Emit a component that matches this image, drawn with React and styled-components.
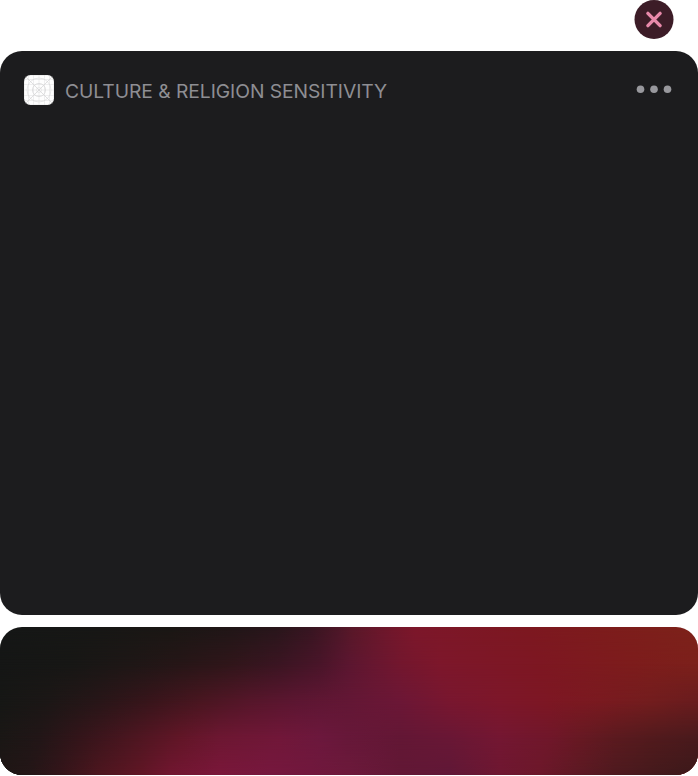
import React from "react";
import styled, { createGlobalStyle } from "styled-components";

const GlobalStyle = createGlobalStyle`
  * { box-sizing: border-box; }
  body { margin: 0; background: #fff; font-family: Inter, "Liberation Sans", sans-serif; }
`;

const Page = styled.main`
  width: 698px;
  height: 776px;
  display: flex;
  flex-direction: column;
  overflow: hidden;
`;

const TopBar = styled.div`
  display: flex;
  justify-content: flex-end;
  height: 51px;
  flex: none;
  padding-right: 24px;
`;

const CloseButton = styled.button`
  width: 40px;
  height: 40px;
  padding: 0;
  border: 0;
  background: none;
  display: block;
  svg { display: block; }
`;

const Card = styled.section`
  width: 697.6px;
  height: 564px;
  flex: none;
  border-radius: 22px;
  background: #1c1c1e;
`;

const CardHeader = styled.header`
  display: flex;
  align-items: center;
  height: 30px;
  margin: 24px 26px 0 24px;
`;

const AppIcon = styled.svg`
  width: 30px;
  height: 30px;
  flex: none;
  display: block;
`;

const Title = styled.h1`
  margin: 2px 0 0 11px;
  flex: 1;
  font-size: 19.3px;
  line-height: 28px;
  font-weight: 400;
  letter-spacing: -0.06px;
  color: #8e8e93;
  white-space: nowrap;
`;

const MoreButton = styled.button`
  display: block;
  padding: 0;
  margin-bottom: 1px;
  border: 0;
  background: none;
  svg { display: block; }
`;

const Glow = styled.section`
  display: grid;
  width: 697.6px;
  height: 148.4px;
  flex: none;
  margin-top: 12px;
  border-radius: 22px;
  overflow: hidden;
`;

const GlowLayer = styled.div`
  grid-area: 1 / 1;
  background: linear-gradient(to right, ${(p) => p.$stops});
  ${(p) => p.$to > 0 && `mask-image: linear-gradient(to bottom, transparent ${p.$to - 25}%, #000 ${p.$to}%);`}
`;

const bands = [
  [[0, "#151716"], [100, "#171715"], [170, "#1a1714"], [230, "#201617"], [276, "#28161b"], [312, "#381521"], [338, "#4c1727"], [352, "#591828"], [385, "#6e172b"], [415, "#7d172a"], [530, "#7d1820"], [600, "#7d1c1c"], [698, "#7d221a"]],
  [[0, "#151615"], [70, "#171715"], [130, "#1e1716"], [180, "#261617"], [230, "#30161a"], [280, "#3b1522"], [320, "#491529"], [348, "#5b1630"], [375, "#681730"], [400, "#73172e"], [440, "#7d172b"], [540, "#7d1722"], [630, "#7d1c1c"], [698, "#7c201b"]],
  [[0, "#161715"], [50, "#1c1716"], [100, "#281618"], [150, "#38151b"], [200, "#491620"], [250, "#56162a"], [300, "#5d1632"], [348, "#631735"], [400, "#6c1736"], [450, "#79172f"], [500, "#7d172a"], [550, "#7d1723"], [600, "#7a1a20"], [650, "#731d1e"], [698, "#691c1e"]],
  [[0, "#1a1715"], [40, "#221617"], [80, "#34151a"], [130, "#4b1620"], [180, "#621627"], [220, "#6d1732"], [280, "#711739"], [320, "#6c183d"], [348, "#671839"], [400, "#631735"], [450, "#691735"], [500, "#741732"], [550, "#70172a"], [580, "#671923"], [615, "#5b1a1f"], [650, "#521a1d"], [698, "#491a1c"]],
  [[0, "#1f1614"], [30, "#241617"], [60, "#34151a"], [100, "#4e161f"], [140, "#601625"], [170, "#711630"], [220, "#7a173a"], [270, "#76183e"], [310, "#71183d"], [348, "#6c193b"], [400, "#621835"], [450, "#601837"], [500, "#6e1731"], [540, "#6c182a"], [580, "#5c1923"], [615, "#4e1a1f"], [650, "#451a1c"], [698, "#3b191a"]],
];

const toStops = (band) => band.map(([x, color]) => `${color} ${x}px`).join(", ");

function GridIcon() {
  return (
    <AppIcon viewBox="0 0 30 30" aria-hidden="true">
      <rect width="30" height="30" rx="6.5" fill="#fefefe" />
      <g fill="none" stroke="#b0b0b3" strokeWidth="0.4" opacity="0.5">
        <rect x="0.3" y="0.3" width="29.4" height="29.4" rx="6.3" />
        <path d="M0 4.5h30M0 9.5h30M0 15h30M0 20.5h30M0 25.5h30M4.5 0v30M9.5 0v30M15 0v30M20.5 0v30M25.5 0v30" />
        <path d="M1.5 1.5l27 27M28.5 1.5l-27 27" strokeWidth="0.8" />
        <circle cx="15" cy="15" r="12" strokeWidth="0.6" />
        <circle cx="15" cy="15" r="6.5" strokeWidth="0.8" />
        <circle cx="15" cy="15" r="2.6" />
      </g>
    </AppIcon>
  );
}

export default function App() {
  return (
    <>
      <GlobalStyle />
      <Page>
        <TopBar>
          <CloseButton aria-label="Close">
            <svg width="40" height="40" viewBox="0 0 40 40">
              <circle cx="20" cy="19.5" r="19.5" fill="#3c1c27" />
              <path d="M13.9 13.4l12.2 12.2M26.1 13.4L13.9 25.6" stroke="#e889aa" strokeWidth="3.4" strokeLinecap="round" />
            </svg>
          </CloseButton>
        </TopBar>
        <Card>
          <CardHeader>
            <GridIcon />
            <Title>CULTURE &amp; RELIGION SENSITIVITY</Title>
            <MoreButton aria-label="More options">
              <svg width="36" height="9" viewBox="0 0 36 9" fill="#98989d">
                <circle cx="4.5" cy="4.3" r="3.8" />
                <circle cx="18" cy="4.3" r="3.8" />
                <circle cx="31.5" cy="4.3" r="3.8" />
              </svg>
            </MoreButton>
          </CardHeader>
        </Card>
        <Glow>
          {bands.map((band, i) => (
            <GlowLayer key={i} $stops={toStops(band)} $to={i * 25} />
          ))}
        </Glow>
      </Page>
    </>
  );
}
